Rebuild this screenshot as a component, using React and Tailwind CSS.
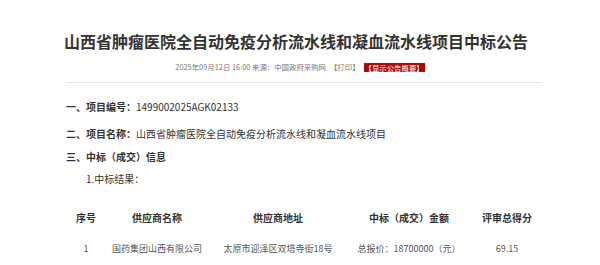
import React from 'react';

const row = ['1', '国药集团山西有限公司', '太原市迎泽区双塔寺街18号', '总报价：18700000（元）', '69.15'];

export default function App() {
  return (
    <div className="w-[600px] h-[265px] bg-white overflow-hidden font-['Noto_Sans_CJK_SC',sans-serif] text-[#333]">
      <h1 className="pt-[29px] pr-[8px] text-center text-[16px] leading-[24px] font-bold text-[#333]">
        山西省肿瘤医院全自动免疫分析流水线和凝血流水线项目中标公告
      </h1>
      <div className="mt-[9px] flex items-center justify-center gap-[4px] text-[7.4px] leading-[10px] text-[#777]">
        <span>2025年09月12日 16:00 来源：中国政府采购网</span>
        <span>【打印】</span>
        <span className="bg-[#a50d0d] text-white px-[1px] leading-[9px]">【显示公告概要】</span>
      </div>
      <div className="ml-[66px] w-[476px] mt-[10px] border-t border-[#e6e6e6]" />
      <div className="ml-[66px] text-[10px] leading-[14px]">
        <p className="mt-[17px]">
          <span className="font-bold">一、项目编号：</span>1499002025AGK02133
        </p>
        <p className="mt-[13px]">
          <span className="font-bold">二、项目名称：</span>山西省肿瘤医院全自动免疫分析流水线和凝血流水线项目
        </p>
        <p className="mt-[9px] font-bold">三、中标（成交）信息</p>
        <p className="mt-[8px] ml-[20px]">1.中标结果：</p>
      </div>
      <table className="ml-[66px] mt-[25px] text-[10px] leading-[14px] border-collapse">
        <thead>
          <tr>
            <th className="w-[40px] text-center font-bold">序号</th>
            <th className="w-[102px] text-center font-bold">供应商名称</th>
            <th className="w-[140px] text-center font-bold">供应商地址</th>
            <th className="w-[122px] text-center font-bold">中标（成交）金额</th>
            <th className="w-[74px] text-center font-bold">评审总得分</th>
          </tr>
        </thead>
        <tbody>
          <tr className="text-[9px] text-[#555]">
            {row.map((c) => (
              <td key={c} className="text-center pt-[17px]">{c}</td>
            ))}
          </tr>
        </tbody>
      </table>
    </div>
  );
}
